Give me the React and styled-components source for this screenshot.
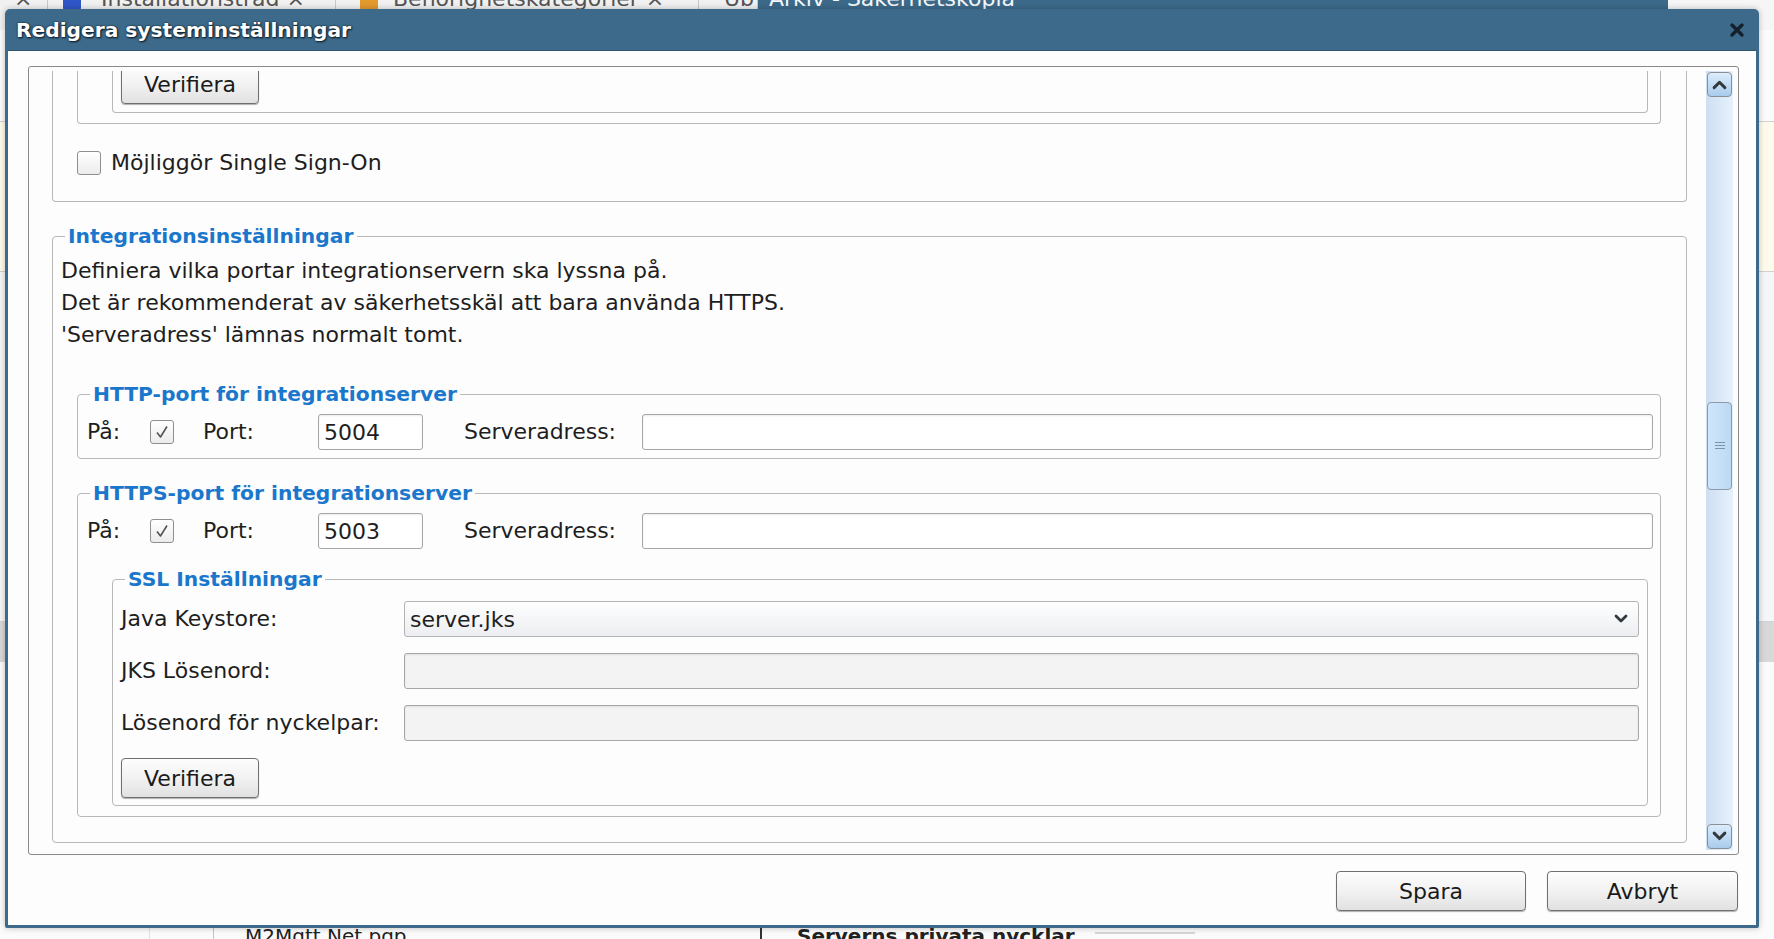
import React from 'react';
import styled, { createGlobalStyle } from 'styled-components';

const GlobalStyle = createGlobalStyle`
  html, body {
    margin: 0;
    padding: 0;
    background: #ffffff;
  }
  body {
    font-family: "DejaVu Sans", Verdana, sans-serif;
    color: #1e1e1e;
  }
  * {
    box-sizing: border-box;
  }
`;

const Page = styled.div`
  position: relative;
  width: 1774px;
  height: 939px;
  overflow: hidden;
  display: flex;
  flex-direction: column;
  background: #fbfbfb;
`;

/* ---- page behind the dialog ---- */

const TopStrip = styled.div`
  display: flex;
  height: 30px;
  flex-shrink: 0;
  overflow: hidden;
  font-size: 22px;
  line-height: 22px;
`;

const TabArea = styled.div`
  display: flex;
  align-items: flex-start;
  width: 758px;
  background: #f1f1f1;
  color: #555;
`;

const Tab = styled.span`
  display: flex;
  align-items: flex-start;
  gap: ${(p) => p.$gap || 0}px;
  width: ${(p) => p.$w}px;
  margin-top: -12px;
  padding-left: ${(p) => p.$pad || 0}px;
  border-right: 1px solid #c8c8c8;
  white-space: nowrap;
`;

const TabIcon = styled.span`
  width: 18px;
  height: 22px;
  background: ${(p) => p.$color};
  border-radius: 2px;
`;

const HeaderBar = styled.div`
  width: 910px;
  background: #3d6a8a;
  color: #f4f8fb;
  padding-left: 11px;
  span {
    display: block;
    margin-top: -12px;
  }
`;

const HeaderRest = styled.div`
  flex: 1;
  background: #f6f6f6;
`;

const BgMain = styled.div`
  flex: 1;
  display: flex;
  flex-direction: column;
`;

const BgBand = styled.div`
  height: ${(p) => p.$h}px;
  background: ${(p) => p.$bg || 'transparent'};
  border-bottom: ${(p) => (p.$line ? '1px solid #d2d2d2' : 'none')};
`;

const BgFooter = styled.div`
  height: 13px;
  display: flex;
  align-items: flex-start;
  font-size: 20px;
  line-height: 20px;
  white-space: nowrap;
`;

const BgCol = styled.div`
  width: ${(p) => p.$w}px;
  height: 20px;
  padding-left: ${(p) => p.$pad || 0}px;
  border-left: ${(p) => p.$border || 'none'};
  font-weight: ${(p) => (p.$bold ? 700 : 400)};
  color: #222;
  display: flex;
  align-items: flex-start;
  gap: 20px;
`;

const BgRule = styled.span`
  display: block;
  width: 100px;
  margin-top: 6px;
  border-top: 2px solid #d6d6d6;
`;

/* ---- dialog ---- */

const Dialog = styled.div`
  position: absolute;
  left: 5px;
  top: 9px;
  width: 1754px;
  height: 919px;
  border: 3px solid #3d6a8a;
  border-radius: 5px 5px 2px 2px;
  background: #fdfdfd;
  display: flex;
  flex-direction: column;
  box-shadow: 0 0 6px rgba(0, 0, 0, 0.25);
`;

const TitleBar = styled.div`
  height: 39px;
  flex-shrink: 0;
  display: flex;
  align-items: center;
  justify-content: space-between;
  padding: 0 11px 0 8px;
  background: #3d6a8a;
  border-bottom: 1px solid #2e5570;
`;

const Title = styled.div`
  color: #ffffff;
  font-size: 20.2px;
  font-weight: 700;
  text-shadow: 1px 1px 2px #0b1a26, 0 0 2px #0b1a26;
  padding-bottom: 2px;
`;

const CloseButton = styled.button`
  border: none;
  background: none;
  padding: 0;
  width: 16px;
  height: 16px;
  margin-bottom: 3px;
  display: flex;
  cursor: pointer;
`;

const DialogBody = styled.div`
  flex: 1;
  display: flex;
  flex-direction: column;
  padding: 15px 17px 14px 20px;
  min-height: 0;
`;

const Panel = styled.div`
  flex: 1;
  min-height: 0;
  display: flex;
  border: 1px solid #8a8a8a;
  border-radius: 3px;
  padding: 4px 5px 4px 0;
  background: #fdfdfd;
`;

const Viewport = styled.div`
  flex: 1;
  overflow: hidden;
  padding: 0 19px 0 23px;
`;

const ScrollContent = styled.div`
  margin-top: ${(p) => -p.$offset}px;
`;

const Group = styled.fieldset`
  margin: ${(p) => p.$margin || '0'};
  min-width: 0;
  border: 1px solid #b8b8b8;
  border-top: ${(p) => (p.$cut ? 'none' : '1px solid #b8b8b8')};
  border-radius: ${(p) => (p.$cut ? '0 0 4px 4px' : '4px')};
  padding: ${(p) => p.$pad || '0'};
`;

const Legend = styled.legend`
  margin-left: ${(p) => p.$indent || 4}px;
  padding: 0 3px;
  font-size: 20.3px;
  line-height: 24px;
  font-weight: 700;
  color: #1b77cb;
`;

const Intro = styled.p`
  margin: 7px 0 0 0;
  font-size: 22px;
  line-height: 32px;
`;

const CheckRow = styled.label`
  display: flex;
  align-items: center;
  gap: 10px;
  margin-top: 26px;
  font-size: 22px;
`;

const Box = styled.span`
  width: 24px;
  height: 24px;
  flex-shrink: 0;
  display: flex;
  align-items: center;
  justify-content: center;
  border: 1px solid #8f8f8f;
  border-radius: 3px;
  background: linear-gradient(#ffffff, #ececec);
  margin-right: ${(p) => p.$after || 0}px;
`;

const PortRow = styled.div`
  display: flex;
  align-items: center;
  height: 36px;
`;

const Label = styled.span`
  width: ${(p) => p.$w}px;
  flex-shrink: 0;
  font-size: 22px;
  line-height: 36px;
  white-space: nowrap;
`;

const TextInput = styled.input`
  height: 36px;
  width: ${(p) => (p.$w ? `${p.$w}px` : 'auto')};
  flex: ${(p) => (p.$w ? 'none' : '1')};
  min-width: 0;
  margin-right: ${(p) => p.$after || 0}px;
  padding: 0 5px;
  font-family: "DejaVu Sans", Verdana, sans-serif;
  font-size: 22px;
  color: #1e1e1e;
  border: 1px solid #a6a6a6;
  border-radius: 3px;
  background: ${(p) => (p.disabled ? '#f3f3f3' : '#ffffff')};
  box-shadow: inset 0 1px 2px rgba(0, 0, 0, 0.08);
  outline: none;
`;

const SslGrid = styled.div`
  display: grid;
  grid-template-columns: 283px 1fr;
  row-gap: 16px;
  align-items: center;
`;

const Select = styled.div`
  height: 36px;
  display: flex;
  align-items: center;
  justify-content: space-between;
  padding: 0 10px 0 5px;
  font-size: 22px;
  border: 1px solid #b3b3b3;
  border-radius: 3px;
  background: linear-gradient(#fefefe, #eceef1);
`;

const Button = styled.button`
  width: ${(p) => p.$w}px;
  height: 40px;
  padding: 0;
  font-family: "DejaVu Sans", Verdana, sans-serif;
  font-size: 22px;
  color: #1a1a1a;
  border: 1px solid #6f6f6f;
  border-radius: 4px;
  background: linear-gradient(#fdfdfd 0%, #f2f2f2 50%, #e1e1e1 100%);
  box-shadow: 0 1px 1px rgba(0, 0, 0, 0.3);
  margin-top: ${(p) => p.$top || 0}px;
  cursor: pointer;
`;

const Footer = styled.div`
  display: flex;
  justify-content: flex-end;
  gap: 21px;
  margin-top: 16px;
  padding-right: 1px;
`;

const Scrollbar = styled.div`
  width: 27px;
  flex-shrink: 0;
  display: flex;
  flex-direction: column;
  padding: 1px 0;
  background: linear-gradient(to right, #cddff2, #e6f1fc);
`;

const ArrowButton = styled.div`
  height: 25px;
  margin: 0 1px;
  display: flex;
  align-items: center;
  justify-content: center;
  border: 1px solid #8a8f96;
  border-radius: 4px;
  background: linear-gradient(#dcedfc, #a9cbec);
`;

const Track = styled.div`
  flex: 1;
`;

const Thumb = styled.div`
  height: 88px;
  margin: ${(p) => p.$top}px 1px 0 1px;
  display: flex;
  align-items: center;
  justify-content: center;
  border: 1px solid #8e9aa6;
  border-radius: 4px;
  background: linear-gradient(to right, #cfe6fb, #bcd9f3);
`;

const Chevron = ({ up, size = 14 }) => (
  <svg width={size} height={size * 0.72} viewBox="0 0 14 10">
    <polyline
      points={up ? '2,8 7,3 12,8' : '2,2 7,7 12,2'}
      fill="none"
      stroke="#33383d"
      strokeWidth="2.8"
      strokeLinecap="round"
      strokeLinejoin="round"
    />
  </svg>
);

const Grip = () => (
  <svg width="12" height="10" viewBox="0 0 12 10">
    <path d="M1 1.5H11M1 4.5H11M1 7.5H11" stroke="#7d93a8" strokeWidth="1" />
  </svg>
);

const Tick = () => (
  <svg width="16" height="16" viewBox="0 0 16 16">
    <path d="M3 8.5 L6.5 13 L13 2.5" fill="none" stroke="#555" strokeWidth="1.6" strokeLinejoin="round" />
  </svg>
);

const CheckBox = ({ checked, after }) => <Box $after={after}>{checked && <Tick />}</Box>;

function PortGroup({ title, port, margin, children }) {
  return (
    <Group $margin={margin} $pad={children ? '8px 7px 10px 9px' : '8px 7px 8px 9px'}>
      <Legend $indent={3}>{title}</Legend>
      <PortRow>
        <Label $w={63}>På:</Label>
        <CheckBox checked after={29} />
        <Label $w={115}>Port:</Label>
        <TextInput $w={105} $after={41} defaultValue={port} />
        <Label $w={178}>Serveradress:</Label>
        <TextInput defaultValue="" />
      </PortRow>
      {children}
    </Group>
  );
}

export default function App() {
  return (
    <>
      <GlobalStyle />
      <Page>
        <TopStrip>
          <TabArea>
            <Tab $w={48} $pad={14}>×</Tab>
            <Tab $w={288} $pad={15} $gap={20}>
              <TabIcon $color="#2f57c8" />
              Installationsträd ×
            </Tab>
            <Tab $w={363} $pad={24} $gap={15}>
              <TabIcon $color="#e39a2d" />
              Behörighetskategorier ×
            </Tab>
            <Tab $w={59} $pad={25}>Üb</Tab>
          </TabArea>
          <HeaderBar>
            <span>Arkiv - Säkerhetskopia</span>
          </HeaderBar>
          <HeaderRest />
        </TopStrip>

        <BgMain>
          <BgBand $h={92} $line />
          <BgBand $h={150} $bg="#fffbec" $line />
          <BgBand $h={350} $bg="#f5f6f8" $line />
          <BgBand $h={40} $bg="#d8d8d8" />
          <BgBand $h={240} />
        </BgMain>

        <BgFooter>
          <BgCol $w={149} />
          <BgCol $w={64} $border="1px solid #e2e2e2" />
          <BgCol $w={547} $pad={31} $border="1px solid #c4c4c4">
            M2Mqtt.Net.pgp
          </BgCol>
          <BgCol $w={500} $pad={35} $border="2px solid #333" $bold>
            Serverns privata nycklar
            <BgRule />
          </BgCol>
        </BgFooter>

        <Dialog>
          <TitleBar>
            <Title>Redigera systeminställningar</Title>
            <CloseButton aria-label="Stäng">
              <svg width="16" height="16" viewBox="0 0 16 16">
                <path d="M3 3 L13 13 M13 3 L3 13" stroke="#14212c" strokeWidth="3.4" strokeLinecap="round" />
              </svg>
            </CloseButton>
          </TitleBar>

          <DialogBody>
            <Panel>
              <Viewport>
                <ScrollContent $offset={16}>
                  <Group $cut $pad="0 25px 26px 24px">
                    <Group $cut $pad="0 12px 10px 34px">
                      <Group $cut $pad="9px 8px 8px 8px">
                        <Button $w={138}>Verifiera</Button>
                      </Group>
                    </Group>
                    <CheckRow>
                      <CheckBox />
                      Möjliggör Single Sign-On
                    </CheckRow>
                  </Group>

                  <Group $margin="22px 0 0 0" $pad="0 8px 25px 8px">
                    <Legend>Integrationsinställningar</Legend>
                    <Intro>
                      Definiera vilka portar integrationservern ska lyssna på.
                      <br />
                      Det är rekommenderat av säkerhetsskäl att bara använda HTTPS.
                      <br />
                      'Serveradress' lämnas normalt tomt.
                    </Intro>

                    <PortGroup title="HTTP-port för integrationserver" port="5004" margin="31px 17px 0 16px" />

                    <PortGroup title="HTTPS-port för integrationserver" port="5003" margin="22px 17px 0 16px">
                      <Group $margin="18px 5px 0 25px" $pad="10px 8px 7px 8px">
                        <Legend>SSL Inställningar</Legend>
                        <SslGrid>
                          <Label>Java Keystore:</Label>
                          <Select>
                            server.jks
                            <Chevron />
                          </Select>
                          <Label>JKS Lösenord:</Label>
                          <TextInput disabled />
                          <Label>Lösenord för nyckelpar:</Label>
                          <TextInput disabled />
                        </SslGrid>
                        <Button $w={138} $top={17}>
                          Verifiera
                        </Button>
                      </Group>
                    </PortGroup>
                  </Group>
                </ScrollContent>
              </Viewport>

              <Scrollbar>
                <ArrowButton>
                  <Chevron up size={15} />
                </ArrowButton>
                <Track>
                  <Thumb $top={305}>
                    <Grip />
                  </Thumb>
                </Track>
                <ArrowButton>
                  <Chevron size={15} />
                </ArrowButton>
              </Scrollbar>
            </Panel>

            <Footer>
              <Button $w={190}>Spara</Button>
              <Button $w={191}>Avbryt</Button>
            </Footer>
          </DialogBody>
        </Dialog>
      </Page>
    </>
  );
}
